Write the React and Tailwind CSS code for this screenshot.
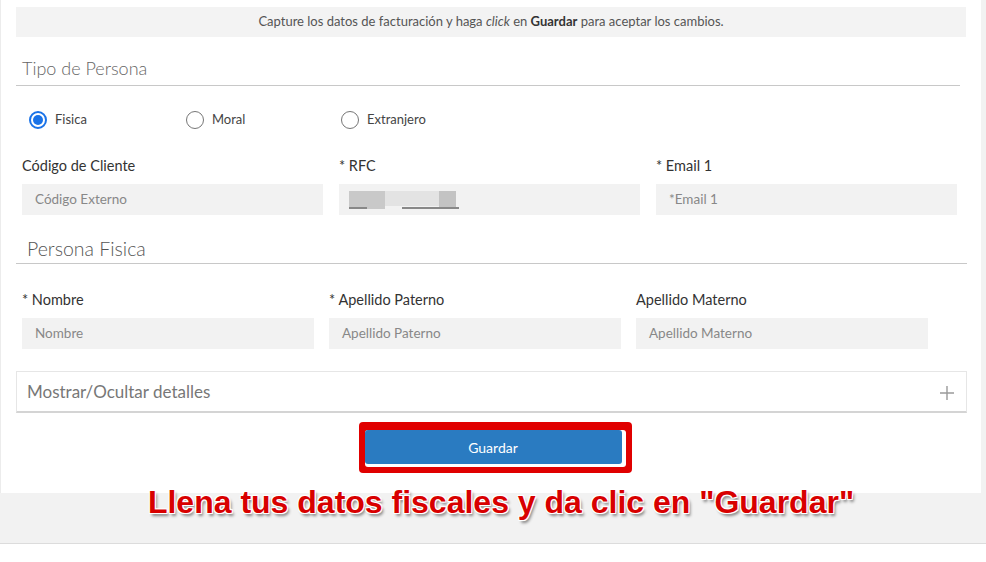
import React from "react";

const font = { fontFamily: "Lato, 'Open Sans', sans-serif" };

function Radio({ checked, label, width }) {
  return (
    <label className={`flex items-center gap-[8px] ${width}`}>
      {checked ? (
        <span className="w-[18px] h-[18px] rounded-full border-[2px] border-[#1a73e8] bg-white flex items-center justify-center">
          <span className="w-[10px] h-[10px] rounded-full bg-[#1a73e8]" />
        </span>
      ) : (
        <span className="w-[18px] h-[18px] rounded-full border border-[#767676] bg-white" />
      )}
      <span className="text-[13px] text-[#444]">{label}</span>
    </label>
  );
}

function Field({ label, placeholder, width, children }) {
  return (
    <div className={`flex flex-col ${width}`}>
      <div className="h-[18px] text-[14.5px] leading-[18px] text-[#333]">{label}</div>
      <div className="mt-[9px] h-[31px] bg-[#f2f2f2] flex items-center pl-[13px] text-[13.5px] text-[#888]">
        {children || placeholder}
      </div>
    </div>
  );
}

export default function App() {
  return (
    <div className="w-[986px] h-[562px] bg-white relative overflow-hidden flex flex-col" style={font}>
      <div className="flex h-[493px]">
        <div className="w-[981px] h-full bg-white border-l border-[#ececec] flex flex-col">
          <div className="mt-[7px] ml-[15px] w-[950px] h-[30px] bg-[#f3f3f3] flex items-center justify-center text-[13px] text-[#555]">
            <span>
              Capture los datos de facturación y haga <i>click</i> en <b className="text-[#333]">Guardar</b> para aceptar los cambios.
            </span>
          </div>

          <div className="ml-[15px] w-[944px] mt-[12px] h-[37px] border-b border-[#c8c8c8] flex items-center pl-[6px] pt-[2px]">
            <span className="text-[18px] font-light text-[#666]">Tipo de Persona</span>
          </div>

          <div className="mt-[24px] ml-[28px] flex items-center h-[20px]">
            <Radio checked label="Fisica" width="w-[157px]" />
            <Radio label="Moral" width="w-[155px]" />
            <Radio label="Extranjero" width="w-[120px]" />
          </div>

          <div className="mt-[27px] ml-[21px] flex gap-[16px]">
            <Field label="Código de Cliente" placeholder="Código Externo" width="w-[301px]" />
            <Field label="* RFC" width="w-[301px]">
              <div className="flex items-end h-[18px] -ml-[3px]">
                <div className="w-[36px] h-[18px] bg-[#c9c9c9] relative">
                  <div className="absolute left-0 bottom-0 w-[18px] h-[2px] bg-[#888]" />
                </div>
                <div className="w-[54px] h-[15px] self-start bg-[#e3e3e3] relative">
                  <div className="absolute left-[17px] bottom-[-3px] w-[40px] h-[2px] bg-[#888]" />
                </div>
                <div className="w-[17px] h-[18px] bg-[#c3c3c3] relative">
                  <div className="absolute left-0 bottom-0 w-[20px] h-[2px] bg-[#888]" />
                </div>
              </div>
            </Field>
            <Field label="* Email 1" placeholder="*Email 1" width="w-[301px]" />
          </div>

          <div className="ml-[15px] w-[951px] mt-[15px] h-[34px] border-b border-[#c8c8c8] flex items-center pl-[11px] pt-[4px]">
            <span className="text-[19.5px] font-light text-[#555]">Persona Fisica</span>
          </div>

          <div className="mt-[27px] ml-[21px] flex gap-[15px]">
            <Field label="* Nombre" placeholder="Nombre" width="w-[292px]" />
            <Field label="* Apellido Paterno" placeholder="Apellido Paterno" width="w-[292px]" />
            <Field label="Apellido Materno" placeholder="Apellido Materno" width="w-[292px]" />
          </div>

          <div className="mt-[22px] ml-[15px] w-[951px] h-[42px] border border-[#e6e6e6] border-b-[2px] border-b-[#d4d4d4] flex items-center justify-between pl-[10px] pr-[11px]">
            <span className="text-[17px] text-[#777]">Mostrar/Ocultar detalles</span>
            <svg width="16" height="16" viewBox="0 0 16 16" className="mt-[2px]">
              <path d="M8 1v14M1 8h14" stroke="#9a9a9a" strokeWidth="1.4" fill="none" />
            </svg>
          </div>

          <div className="mt-[9px] flex justify-center">
            <div className="ml-[8px] w-[273px] h-[51px] bg-[#e00000] rounded-[4px] pl-[6px] pt-[8px] pr-[6px] pb-[6px]">
              <div className="h-full bg-white rounded-[3px] pr-[4px] pb-[3px]">
                <div className="h-full bg-[#2a7bc1] rounded-[3px] flex items-center justify-center text-[14px] text-white">
                  Guardar
                </div>
              </div>
            </div>
          </div>
        </div>
        <div className="flex-1 bg-[#f2f2f2]" />
      </div>
      <div className="h-[51px] bg-[#f2f2f2] border-b border-[#dcdcdc]" />
      <div className="flex-1 bg-white" />

      <div className="absolute left-0 top-[478px] w-[986px] flex justify-center">
        <span
          className="ml-[16px] text-[32px] font-bold text-[#d80000] whitespace-nowrap [text-shadow:0_0_2px_#fff,1px_1px_0_#fff,-1px_-1px_0_#fff,1px_-1px_0_#fff,-1px_1px_0_#fff,2px_3px_3px_rgba(0,0,0,0.45)]"
          style={{ fontFamily: "'Liberation Sans', Arial, sans-serif" }}
        >
          Llena tus datos fiscales y da clic en "Guardar"
        </span>
      </div>
    </div>
  );
}
